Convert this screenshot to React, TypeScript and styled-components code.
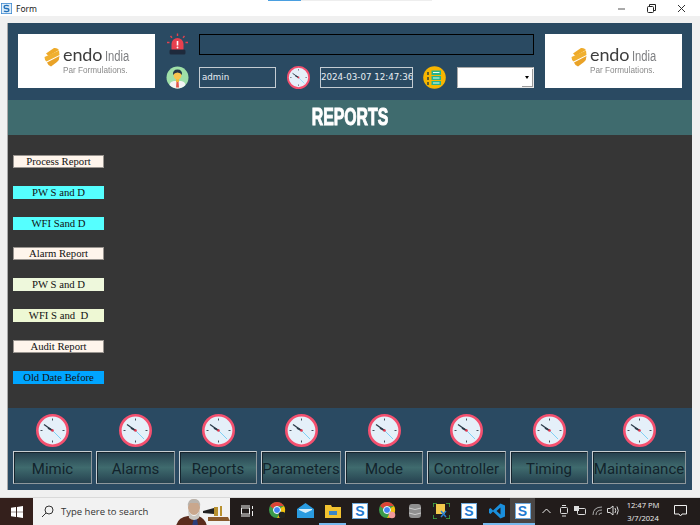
import React from "react";
import styled, { createGlobalStyle } from "styled-components";

const Global = createGlobalStyle`
  html, body { margin: 0; padding: 0; width: 700px; height: 525px; overflow: hidden; background: #f0f0f0; }
  * { box-sizing: border-box; }
`;
const Page = styled.div`
  width: 700px; height: 525px; display: flex; flex-direction: column; background: #f0f0f0;
  font-family: "Noto Sans", sans-serif;
`;
const TitleBar = styled.div`
  height: 16px; flex: none; background: #fff; display: flex; flex-direction: column;
`;
const TabStrip = styled.div`
  height: 1px; flex: none; margin-left: 268px; width: 164px;
  background: linear-gradient(90deg, #4a9fe0 0 33px, #eee 33px);
`;
const TitleRow = styled.div`
  flex: 1; display: flex; align-items: center; padding: 0 14px 0 1px; gap: 4px;
  font: 8px "Noto Sans", sans-serif; color: #222;
`;
const TitleText = styled.span`flex: 1; font-size: 8.5px; line-height: 14px;`;
const WinControls = styled.div`display: flex; gap: 21px; align-items: center; margin-top: -1px;`;

const Form = styled.div`
  width: 685px; height: 467px; margin: 7px 0 0 7px; flex: none; display: flex; flex-direction: column;
  border-left: 1px solid #a9a9a9;
`;
const Header = styled.header`
  height: 77px; flex: none; background: #2a4a62; display: flex; padding: 11px 11px 12px 10px; gap: 11px;
`;
const LogoCard = styled.div`
  width: 137px; height: 54px; background: #fff; display: flex; flex-direction: column; align-items: flex-start;
  filter: blur(0.3px); flex: none; padding: 13px 0 0 26px;
`;
const LogoTop = styled.div`display: flex; align-items: flex-start; gap: 3px; height: 20px;`;
const LogoWords = styled.div`display: flex; align-items: baseline; margin-top: -3px; height: 20px;`;
const LogoEndo = styled.span`
  font: 400 18px/20px "Lato", sans-serif; color: #3d3d3d; letter-spacing: -0.1px;
`;
const LogoIndia = styled.span`
  font: 400 14px/20px "Liberation Sans", sans-serif; color: #7d7e81; margin-left: 3px; transform: scaleX(.8); transform-origin: left; display: inline-block; width: 25px;
`;
const LogoSub = styled.div`
  font: 400 8.2px/9px "Liberation Sans", sans-serif; color: #8b8b8b; margin: -1px 0 0 19px; white-space: nowrap;
`;
const Middle = styled.div`flex: 1; display: flex; flex-direction: column; justify-content: space-between;`;
const HeadRow = styled.div`display: flex; align-items: center; height: 21px;`;
const IconSlot = styled.div<{ $w: number; $align?: string; $pl?: number }>`
  width: ${p => p.$w}px; padding-left: ${p => p.$pl ?? 0}px; flex: none; display: flex; align-items: center; justify-content: ${p => p.$align ?? "center"};
`;
const AlarmBox = styled.div`flex: 1; height: 21px; border: 1px solid #000; background: #2a4a62;`;
const Field = styled.div<{ $w: number; $size: number; $pad: number }>`
  width: ${p => p.$w}px; height: 21px; flex: none; border: 1px solid #c4ccd2; color: #e8eef2;
  font: ${p => p.$size}px/19px "DejaVu Sans", sans-serif; padding-left: ${p => p.$pad}px; white-space: nowrap; overflow: hidden;
`;
const SelectBox = styled.div`
  width: 77px; height: 21px; margin-left: 11px; flex: none; background: #fff; display: flex; justify-content: flex-end; align-items: center;
  border: 1px solid; border-color: #a8a8a8 #e8e8e8 #e8e8e8 #a8a8a8;
`;
const SelectArrow = styled.div`
  width: 11px; height: 18px; background: #fff; display: flex; align-items: center; justify-content: center; border-right: 1px solid #9a9a9a; border-bottom: 1px solid #9a9a9a;
  &::before { content: ""; border: 2.5px solid transparent; border-top: 3px solid #000; margin-top: 3px; }
`;
const TitleBand = styled.div`
  height: 35px; flex: none; background: #3f6b6e; display: flex; align-items: center; justify-content: center; padding-bottom: 1px;
`;
const BandText = styled.h1`
  margin: 0; color: #fff; font: 700 24px/26px "Liberation Sans", sans-serif;
  -webkit-text-stroke: 1px #fff; transform: scaleX(.66);
`;
const Content = styled.main`
  height: 273px; flex: none; background: #363636; padding: 20px 0 0 5px; display: flex; flex-direction: column; gap: 17.8px;
`;
const ReportBtn = styled.div<{ $bg: string }>`
  width: 91px; height: 13px; background: ${p => p.$bg};
  border: 1px solid ${p => p.$bg === "#fff5ec" ? "#9a9590" : p.$bg};
  font: 10.7px/11px "Liberation Serif", serif; color: #111; text-align: center; white-space: pre;
`;
const Nav = styled.nav`
  height: 82px; flex: none; background: #2a4a62; display: flex; padding: 6px 0 0 5px; gap: 4px;
`;
const NavItem = styled.div<{ $w: number }>`
  width: ${p => p.$w}px; flex: none; display: flex; flex-direction: column; align-items: center; gap: 4px;
`;
const NavBtn = styled.div`
  width: 100%; height: 33px; border: 1px solid; border-color: #c8ced2 #8d979c #8d979c #c8ced2;
  box-shadow: inset 1px 1px 0 #16252e;
  background: linear-gradient(180deg, #263f4e 0%, #3f6b6e 50%, #264250 100%);
  color: #12232c; font: 400 15px/31px "Roboto", sans-serif; text-align: center; white-space: nowrap; padding-top: 2px;
`;
const Taskbar = styled.footer`
  height: 28px; margin-top: 7px; flex: none; background: #221c1b; display: flex; align-items: center; border-top: 1px solid #d9d9d9;
`;
const StartBtn = styled.div`
  width: 33px; height: 100%; flex: none; background: #34201c; display: flex; align-items: center; justify-content: center;
`;
const SearchBox = styled.div`
  width: 197px; height: 100%; flex: none; background: #f2f2f2; display: flex; align-items: center; padding-left: 8px; overflow: hidden;
  color: #333; font: 9.5px "Open Sans", sans-serif;
`;
const SearchText = styled.span`margin-left: 7px; flex: 1; white-space: nowrap;`;
const Slot = styled.div<{ $w: number; $active?: boolean; $run?: boolean }>`
  width: ${p => p.$w}px; height: 100%; flex: none; display: flex; align-items: center; justify-content: center;
  background: ${p => p.$active ? "#4a4645" : "transparent"};
  border-bottom: 2px solid ${p => p.$run ? "#76b9ed" : "transparent"};
`;
const SIcon = styled.div`
  width: 16px; height: 16px; background: #fff; border: 1px solid #6fa9dc; color: #1f7ad0;
  font: 700 14px/14px "Liberation Sans", sans-serif; text-align: center;
`;
const Clockbox = styled.div`
  width: 36px; flex: none; margin-left: 4px; color: #eee; font: 7.6px/13px "Open Sans", sans-serif; text-align: center;
`;

const SWin = () => (
  <svg width="11" height="11" viewBox="0 0 14 14" style={{ flex: "none" }}>
    <rect x="0.5" y="0.5" width="13" height="13" fill="#fff" stroke="#3a87cf" />
    <rect x="1.5" y="1.5" width="11" height="11" fill="#d8e9f7" />
    <path d="M10 4 Q9 3 7 3 Q4 3 4 5 Q4 7 7 7 Q10 7 10 9 Q10 11 7 11 Q4.500 11 4 10" fill="none" stroke="#1f6fb8" strokeWidth="1.6" />
  </svg>
);
const Mark = () => (
  <svg width="16" height="20" viewBox="0 0 16 20" style={{ flex: "none" }}>
    <path d="M2 6.500 L10 1 Q13 0.500 15 3 L4.500 9 Z" fill="#eeaa2a" />
    <path d="M0.500 10 L15 3.500 L15.500 8 L2.500 14.500 Q0.500 13 0.500 10Z" fill="#f0b030" />
    <path d="M3 15.500 L15.500 9 Q15.500 13 13 15 L7 19.500 Q4 18.500 3 15.500Z" fill="#e9a227" />
  </svg>
);
const Logo = () => (
  <LogoCard>
    <LogoTop>
      <Mark />
      <LogoWords>
        <LogoEndo>endo</LogoEndo>
        <LogoIndia>India</LogoIndia>
      </LogoWords>
    </LogoTop>
    <LogoSub>Par Formulations.</LogoSub>
  </LogoCard>
);
const Alarm = () => (
  <svg width="23" height="23" viewBox="0 0 23 23">
    <g stroke="#e2424f" strokeWidth="1.4">
      <path d="M11.500 0.500V3M4.500 3L6 4.700M18.500 3L17 4.700M1 9.500H3.500M19.500 9.500H22" />
    </g>
    <path d="M5.500 17V11 a6 6 0 0 1 12 0V17Z" fill="#e8404e" />
    <rect x="3.500" y="16.500" width="16" height="5" rx="1.500" fill="#1e2a3c" />
    <path d="M11.500 8V12.500" stroke="#fff" strokeWidth="1.6" />
    <circle cx="11.500" cy="14.500" r="0.900" fill="#fff" />
  </svg>
);
const User = () => (
  <svg width="23" height="23" viewBox="0 0 23 23">
    <circle cx="11.500" cy="11.500" r="11" fill="#9fe0a8" />
    <path d="M3.500 19 Q4 15.500 8 15 L15 15 Q19 15.500 19.500 19 A11 11 0 0 1 3.500 19Z" fill="#f4f4f4" />
    <path d="M10.500 15H12.500L13 21.500H10Z" fill="#e2574c" />
    <rect x="10" y="12" width="3" height="4" fill="#f0b53c" />
    <ellipse cx="11.500" cy="9" rx="4" ry="4.600" fill="#f8c44e" />
    <path d="M7 9 Q6.500 3.500 11.500 3.500 Q16.500 3.500 16 9 Q14.500 6.500 11.500 6.500 Q8.500 6.500 7 9Z" fill="#25394a" />
  </svg>
);
const Clock = ({ size }: { size: number }) => (
  <svg width={size} height={size} viewBox="0 0 33 33" style={{ display: "block", flex: "none" }}>
    <circle cx="16.500" cy="16.500" r="15.200" fill="#e5f0f9" stroke="#f4506f" strokeWidth="2.600" />
    <path d="M16.500 4.500V6.500M16.500 26.500V28.500M4.500 16.500H6.500M26.500 16.500H28.500" stroke="#44505c" strokeWidth="1" />
    <path d="M16.500 16.500L25 25" stroke="#7fd0f5" strokeWidth="1" />
    <path d="M16.500 16.500L8 10.500" stroke="#2b3a48" strokeWidth="1.300" />
    <path d="M16.500 16.500L12 14" stroke="#2b3a48" strokeWidth="1.800" />
    <circle cx="16.500" cy="16.500" r="1.300" fill="#e8374f" />
  </svg>
);
const ListBadge = () => (
  <svg width="23" height="23" viewBox="0 0 23 23">
    <circle cx="11.500" cy="11.500" r="11.300" fill="#f7b500" />
    <path d="M8.500 4.500H18V9H8.500ZM8.500 10H18V14H8.500ZM8.500 15H18V19H8.500Z" fill="#27b48c" />
    <path d="M10 6.500H16.500M10 12H16.500M10 17H16.500" stroke="#e8fff4" strokeWidth="1" />
    <path d="M5 6V9M5 11V14M5 16V19" stroke="#3f4a30" strokeWidth="1.600" />
  </svg>
);
const Chrome = ({ dot }: { dot: string }) => (
  <svg width="17" height="17" viewBox="0 0 17 17">
    <circle cx="8" cy="8" r="8" fill="#3b9b4a" />
    <path d="M1.100 4 A8 8 0 0 1 15 4 H8 A4 4 0 0 0 4.300 6.800Z" fill="#db4437" />
    <path d="M15 4 A8 8 0 0 1 8 16 L11.500 10 A4 4 0 0 0 11.500 6Z" fill="#f4c20d" />
    <circle cx="8" cy="8" r="3.500" fill="#4285f4" stroke="#fff" strokeWidth="1" />
    <circle cx="13" cy="13" r="3.300" fill={dot} />
  </svg>
);

const reports: [string, string][] = [
  ["Process Report", "#fff5ec"], ["PW S and D", "#55ffff"], ["WFI Sand D", "#55ffff"], ["Alarm Report", "#fff5ec"],
  ["PW S and D", "#eef8dc"], ["WFI S and  D", "#eef8d4"], ["Audit Report", "#fff5ec"], ["Old Date Before", "#00a5ff"],
];
const navs: [string, number][] = [
  ["Mimic", 79], ["Alarms", 79], ["Reports", 78], ["Parameters", 80], ["Mode", 78], ["Controller", 79], ["Timing", 78], ["Maintainance", 94],
];

export default function App() {
  return (
    <Page>
      <Global />
      <TitleBar>
        <TabStrip />
        <TitleRow>
          <SWin />
          <TitleText>Form</TitleText>
          <WinControls>
            <svg width="9" height="9" viewBox="0 0 9 9"><path d="M1 5H8" stroke="#555" /></svg>
            <svg width="9" height="9" viewBox="0 0 9 9" fill="none" stroke="#222"><rect x="0.500" y="2.500" width="6" height="6" rx="1" /><path d="M2.500 2.500V0.500H8.500V6.500H6.500" /></svg>
            <svg width="9" height="9" viewBox="0 0 9 9"><path d="M1 1L8 8M8 1L1 8" stroke="#333" /></svg>
          </WinControls>
        </TitleRow>
      </TitleBar>
      <Form>
        <Header>
          <Logo />
          <Middle>
            <HeadRow>
              <IconSlot $w={33} $align="flex-start"><Alarm /></IconSlot>
              <AlarmBox />
            </HeadRow>
            <HeadRow>
              <IconSlot $w={33} $align="flex-start"><User /></IconSlot>
              <Field $w={77} $size={8.7} $pad={2}>admin</Field>
              <IconSlot $w={44}><Clock size={23} /></IconSlot>
              <Field $w={93} $size={8.7} $pad={0}>2024-03-07 12:47:36</Field>
              <IconSlot $w={33} $pl={10}><ListBadge /></IconSlot>
              <SelectBox><SelectArrow /></SelectBox>
            </HeadRow>
          </Middle>
          <Logo />
        </Header>
        <TitleBand><BandText>REPORTS</BandText></TitleBand>
        <Content>
          {reports.map(([t, c], i) => <ReportBtn key={i} $bg={c}>{t}</ReportBtn>)}
        </Content>
        <Nav>
          {navs.map(([t, w]) => (
            <NavItem key={t} $w={w}>
              <Clock size={33} />
              <NavBtn>{t}</NavBtn>
            </NavItem>
          ))}
        </Nav>
      </Form>
      <Taskbar>
        <StartBtn>
          <svg width="12" height="12" viewBox="0 0 12 12" fill="#fff"><path d="M0 1.800L5 1V5.700H0ZM6 .9L12 0V5.700H6ZM0 6.300H5V11L0 10.200ZM6 6.300H12V12L6 11.100Z" /></svg>
        </StartBtn>
        <SearchBox>
          <svg width="13" height="13" viewBox="0 0 13 13" fill="none" stroke="#333" strokeWidth="1"><circle cx="8" cy="5" r="4" /><path d="M5 8L1 12" /></svg>
          <SearchText>Type here to search</SearchText>
          <svg width="54" height="28" viewBox="0 0 54 28" style={{ flex: "none" }}>
            <path d="M0 28Q2 19 12 18L22 18Q29 20 31 28Z" fill="#5a2c1c" />
            <path d="M16 28L18 20H21L22 28Z" fill="#2a3d7a" />
            <ellipse cx="18" cy="9" rx="6" ry="8" fill="#c9a78d" />
            <path d="M12 9Q11 1 18 1Q25 1 24 9L22 5H14Z" fill="#b9b4ae" />
            <path d="M12 12Q18 24 24 12L23 20Q18 24 13 20Z" fill="#c9c6c0" />
            <path d="M27 13L38 10V16L27 15Z" fill="#222" />
            <path d="M38 9H42V18H38ZM44 8H46V18H44Z" fill="#b8912f" />
            <path d="M32 19H52L54 23H32Z" fill="#8a5a2c" />
          </svg>
        </SearchBox>
        <Slot $w={34}>
          <svg width="13" height="12" viewBox="0 0 13 12" fill="none" stroke="#eee"><rect x="0.500" y="3" width="8" height="6" /><path d="M0 1H9M0 11H9M11.500 1V4M11.500 6V11" /></svg>
        </Slot>
        <Slot $w={27}><Chrome dot="#222" /></Slot>
        <Slot $w={28}>
          <svg width="17" height="15" viewBox="0 0 17 15"><path d="M0 6L8.500 0L17 6V15H0Z" fill="#2a9be0" /><path d="M2 6H15V7L8.500 10L2 7Z" fill="#d6eefb" /></svg>
        </Slot>
        <Slot $w={27} $run>
          <svg width="16" height="14" viewBox="0 0 16 14"><path d="M0 1H6L7 3H16V14H0Z" fill="#f2c230" /><rect x="4" y="7" width="8" height="4" fill="#3a86c8" /></svg>
        </Slot>
        <Slot $w={28}><SIcon>S</SIcon></Slot>
        <Slot $w={27}><Chrome dot="#f29a9a" /></Slot>
        <Slot $w={27}>
          <svg width="12" height="16" viewBox="0 0 12 16"><rect y="1" width="12" height="14" rx="3" fill="#8f8f8f" /><path d="M0 5Q6 8 12 5M0 10Q6 13 12 10" fill="none" stroke="#ccc" /></svg>
        </Slot>
        <Slot $w={27}>
          <svg width="17" height="16" viewBox="0 0 17 16"><path d="M3 1H12V11H3Z" fill="#f2c94c" /><path d="M0 0H4M0 0V4M17 0H13M17 0V4M0 16H4M0 16V12M17 16H13M17 16V12" stroke="#3fae49" strokeWidth="1.500" /><path d="M8 8L13 14M13 8L8 14" stroke="#2a7fd0" strokeWidth="1.500" /></svg>
        </Slot>
        <Slot $w={28}><SIcon>S</SIcon></Slot>
        <Slot $w={27} $run>
          <svg width="16" height="16" viewBox="0 0 16 16"><path d="M11.500 0.500L16 2.500V13.500L11.500 15.500L4 8.500L1.500 11L0 10V6L1.500 5L4 7.500ZM11.500 4.500L7.500 8L11.500 11.500Z" fill="#1a8fdc" /></svg>
        </Slot>
        <Slot $w={25} $active $run><SIcon>S</SIcon></Slot>
        <Slot $w={22}>
          <svg width="9" height="6" viewBox="0 0 9 6" fill="none" stroke="#eee"><path d="M0.500 5L4.500 1L8.500 5" /></svg>
        </Slot>
        <Slot $w={14}>
          <svg width="10" height="12" viewBox="0 0 10 12" fill="none" stroke="#ddd"><rect x="1.500" y="2.500" width="7" height="6" rx="1" /><path d="M3 0.500H7M3 11H7" /></svg>
        </Slot>
        <Slot $w={18}>
          <svg width="12" height="10" viewBox="0 0 12 10" fill="none" stroke="#ddd"><rect x="3.500" y="2.500" width="8" height="6" rx="1" /><rect x="0.500" y="0.500" width="4" height="4" fill="#ddd" /></svg>
        </Slot>
        <Slot $w={16}>
          <svg width="11" height="10" viewBox="0 0 11 10" fill="none" stroke="#aaa"><path d="M1 9Q1 1 10 1M4 9Q4 4 10 4M7 9Q7 7 10 7" /></svg>
        </Slot>
        <Slot $w={16}>
          <svg width="13" height="11" viewBox="0 0 13 11" fill="none" stroke="#ddd"><path d="M0.500 3.500H3L6 1V10L3 7.500H0.500ZM8 3Q9.500 5.500 8 8M10 1.500Q12.500 5.500 10 9.500" /></svg>
        </Slot>
        <Clockbox>12:47 PM<br />3/7/2024</Clockbox>
        <Slot $w={38}>
          <svg width="13" height="12" viewBox="0 0 13 12" fill="none" stroke="#eee"><path d="M0.500 0.500H12.500V9H8L6.500 11L5 9H0.500Z" /></svg>
        </Slot>
      </Taskbar>
    </Page>
  );
}
